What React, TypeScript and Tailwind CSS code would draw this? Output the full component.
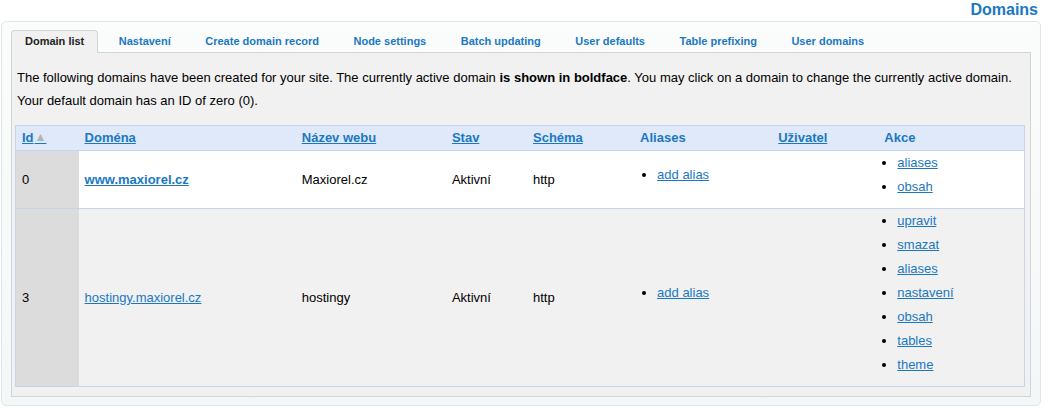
import React from 'react';

const tabs = [
  'Domain list',
  'Nastavení',
  'Create domain record',
  'Node settings',
  'Batch updating',
  'User defaults',
  'Table prefixing',
  'User domains',
];

const linkCls = 'text-[#1a78c2] underline';

function Actions({ items }: { items: string[] }) {
  return (
    <ul className="list-disc pl-[13px] mb-[9px]">
      {items.map((it) => (
        <li key={it} className="leading-[24px]">
          <a href="#" className={linkCls}>{it}</a>
        </li>
      ))}
    </ul>
  );
}

function AddAlias() {
  return (
    <ul className="list-disc pl-[17px] mb-[9px]">
      <li className="leading-[24px]">
        <a href="#" className={linkCls}>add alias</a>
      </li>
    </ul>
  );
}

function Th({ children, link = true }: { children: React.ReactNode; link?: boolean }) {
  return (
    <th className="h-[25px] px-[6px] text-left font-bold text-[#1a78c2]">
      {link ? <a href="#" className="underline">{children}</a> : children}
    </th>
  );
}

export default function App() {
  return (
    <div className="w-[1049px] h-[413px] bg-white font-['Liberation_Sans',Arial,sans-serif] text-[13px] text-black overflow-hidden">
      <div className="h-[21px] flex justify-end pr-[11px]">
        <h1 className="text-[16px] leading-[19px] font-bold text-[#1a78c2]">Domains</h1>
      </div>

      <div className="ml-px w-[1040px] h-[385px] border border-[#dfe5e8] rounded-[5px] bg-linear-to-b from-[#fbfcfc] to-[#f4f7f8] pt-[8px] pl-[9px]">
        <div className="flex gap-[6.5px] h-[22px]">
          {tabs.map((t, i) => (
            <div
              key={t}
              className={
                i === 0
                  ? 'relative z-10 h-[23px] px-[13px] border border-b-0 border-[#d0d6d8] rounded-t-[4px] bg-[#f1f1f1] text-[11px] font-bold text-[#222] leading-[21px]'
                  : 'h-[22px] px-[14px] text-[11px] font-bold text-[#1a78c2] leading-[22px]'
              }
            >
              {t}
            </div>
          ))}
        </div>

        <div className="w-[1020px] h-[345px] border border-[#d0d6d8] bg-[#f1f1f1] pt-[13px] pl-[3px] pr-[5px]">
          <p className="leading-[23px] pl-[2px]">
            The following domains have been created for your site. The currently active domain{' '}
            <b>is shown in boldface</b>. You may click on a domain to change the currently active domain.
            <br />
            Your default domain has an ID of zero (0).
          </p>

          <table className="mt-[13px] w-[1010px] table-fixed border-collapse border border-[#c7d4ea]">
            <colgroup>
              <col className="w-[63px]" />
              <col className="w-[217px]" />
              <col className="w-[150px]" />
              <col className="w-[81px]" />
              <col className="w-[107px]" />
              <col className="w-[138px]" />
              <col className="w-[106px]" />
              <col className="w-[146px]" />
            </colgroup>
            <thead>
              <tr className="bg-[#dfe9fa] border-b border-[#c7d4ea]">
                <Th>
                  Id<span className="text-[12px] leading-none text-[#b3b3b3] pl-px relative -top-[1px]">▲</span>
                </Th>
                <Th>Doména</Th>
                <Th>Název webu</Th>
                <Th>Stav</Th>
                <Th>Schéma</Th>
                <Th link={false}>Aliases</Th>
                <Th>Uživatel</Th>
                <Th link={false}>Akce</Th>
              </tr>
            </thead>
            <tbody>
              <tr className="bg-white border-b border-[#c7d4ea]">
                <td className="bg-[#dcdcdc] px-[6px] align-middle">0</td>
                <td className="px-[6px] align-middle">
                  <a href="#" className={linkCls + ' font-bold'}>www.maxiorel.cz</a>
                </td>
                <td className="px-[6px] align-middle">Maxiorel.cz</td>
                <td className="px-[6px] align-middle">Aktivní</td>
                <td className="px-[6px] align-middle">http</td>
                <td className="px-[6px] align-middle"><AddAlias /></td>
                <td className="px-[6px]" />
                <td className="px-[6px] align-top"><Actions items={['aliases', 'obsah']} /></td>
              </tr>
              <tr className="bg-[#f1f1f1]">
                <td className="bg-[#dcdcdc] px-[6px] align-middle">3</td>
                <td className="px-[6px] align-middle">
                  <a href="#" className={linkCls}>hostingy.maxiorel.cz</a>
                </td>
                <td className="px-[6px] align-middle">hostingy</td>
                <td className="px-[6px] align-middle">Aktivní</td>
                <td className="px-[6px] align-middle">http</td>
                <td className="px-[6px] align-middle"><AddAlias /></td>
                <td className="px-[6px]" />
                <td className="px-[6px] align-top">
                  <Actions items={['upravit', 'smazat', 'aliases', 'nastavení', 'obsah', 'tables', 'theme']} />
                </td>
              </tr>
            </tbody>
          </table>
        </div>
      </div>
    </div>
  );
}
